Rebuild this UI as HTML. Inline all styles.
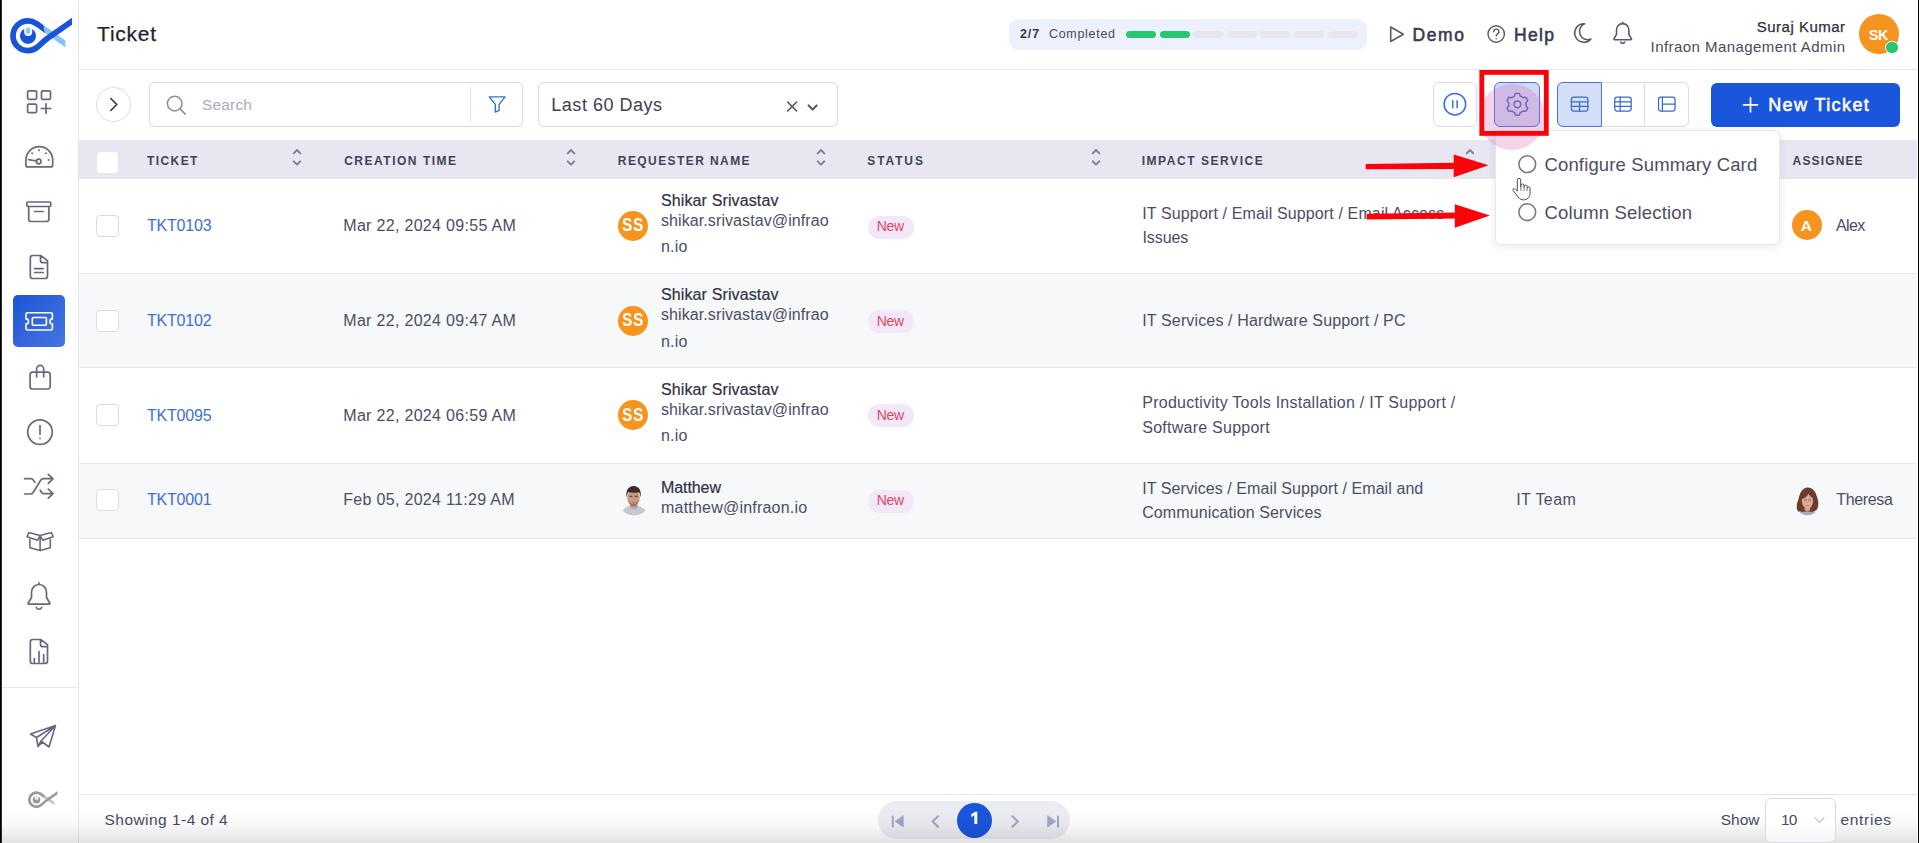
<!DOCTYPE html>
<html>
<head>
<meta charset="utf-8">
<title>Ticket</title>
<style>
*{box-sizing:border-box;margin:0;padding:0}
html,body{width:1919px;height:843px;overflow:hidden;background:#fff}
body{font-family:"Liberation Sans",sans-serif;color:#444050;position:relative;font-size:15px}
.abs{position:absolute}
.t{position:absolute;white-space:nowrap;line-height:1}
#edgeL{left:0;top:0;width:2px;height:843px;background:linear-gradient(90deg,#000 0,#000 60%,#777 100%)}
#edgeR{left:1918px;top:0;width:1px;height:843px;background:#000}
#side{left:2px;top:0;width:77px;height:843px;background:#fff;border-right:1px solid #e6e6ef}
#hdr{left:79px;top:0;width:1838px;height:69.5px;background:#fff;border-bottom:1px solid #e4e4ee}
#thead{left:79px;top:140.2px;width:1838px;height:38.5px;background:#e8e7f1}
.row{left:79px;width:1838px;border-bottom:1px solid #e7e7ef}
.g{background:#f7f8fa}
.cb{width:22.5px;height:22px;border:1px solid #dad9e4;border-radius:4px;background:#fff;left:96px}
.av{width:30px;height:30.1px;border-radius:50%;background:#f7941d;left:618px}
.bdg{left:868px;width:45.9px;height:22.8px;border-radius:11.5px;background:#f2e8fa}
.sort{position:absolute;width:10px;height:20px}
</style>
</head>
<body>
<div class="abs" id="side"></div>
<div class="abs" id="hdr"></div>
<div class="abs" id="thead"></div>
<div class="abs row" style="top:178px;height:96px"></div><div class="abs row g" style="top:274px;height:94px"></div><div class="abs row" style="top:368px;height:96px"></div><div class="abs row g" style="top:464px;height:75px"></div>

<div class="abs" style="left:13.2px;top:294.6px;width:51.8px;height:52.1px;border-radius:5px;background:linear-gradient(135deg,#1f55d6,#4576e0)"></div>
<div class="abs" style="left:2px;top:687.3px;width:77px;height:1px;background:#e6e6ef"></div>
<svg class="abs" style="left:0;top:0" width="79" height="843" viewBox="0 0 79 843" fill="none" stroke="#6a677c" stroke-width="1.7" stroke-linecap="round" stroke-linejoin="round">
<g stroke="none" >
<clipPath id="cl1853d8"><rect x="0" y="0" width="65.3" height="60"/></clipPath>
<clipPath id="cd1853d8"><rect x="0" y="0" width="72" height="60"/></clipPath>
<path d="M36.45 23.55L70 47.1" stroke="#82c4fb" stroke-width="5.5" fill="none" clip-path="url(#cl1853d8)"/>
<path d="M38 21.34L43.7 25.4Q43.3 29.5 45.3 33.2L34.9 25.76z" fill="#1853d8"/>
<path d="M78 17.1L48.8 37.4C44 40.7 41 44 37.5 47C34.5 49.5 31.5 50.65 27.9 50.65A14.9 14.9 0 0 1 13 35.75A14.9 14.9 0 0 1 27.9 20.85C31 20.85 33.8 21.8 36.45 23.55" stroke="#1853d8" stroke-width="5.7" fill="none" clip-path="url(#cd1853d8)"/>
<circle cx="28" cy="35.9" r="8" fill="#1853d8"/>
<path d="M24.2 26.5h8v5.4a4 4 0 0 1-8 0z" fill="#fff"/>
<path d="M26.1 27.8h4.2v4.4a1.5 1.5 0 0 1-1.5 1.5h-1.2a1.5 1.5 0 0 1-1.5-1.5z" fill="#8ccbfb"/>
</g>
<rect x="27.6" y="90.8" width="9" height="8.5" rx="1.2"/><rect x="41.5" y="90.8" width="9" height="8.5" rx="1.2"/><rect x="27.6" y="104.2" width="9" height="8.5" rx="1.2"/><path d="M41.3 108.5h9.5M46 103.8v9.5"/>
<path d="M25.9 164.9v-4.8a13.4 13.4 0 0 1 26.8 0v4.8a2 2 0 0 1-2 2h-22.8a2 2 0 0 1-2-2z"/><circle cx="38.7" cy="161.5" r="2.3"/><path d="M36.5 161l-8-1.4"/>
<g stroke="none" fill="#6a677c"><circle cx="32.1" cy="153.2" r="1"/><circle cx="39" cy="150.2" r="1"/><circle cx="45.9" cy="153.2" r="1"/><circle cx="48.6" cy="160" r="1"/></g>
<rect x="26.8" y="202" width="24" height="4.5" rx="1.2"/><path d="M28.7 206.5v12.5a2.5 2.5 0 0 0 2.5 2.5h15.2a2.5 2.5 0 0 0 2.5-2.5v-12.5M34.5 211.5h8.5"/>
<path d="M40.5 255.5h-7.7a2.5 2.5 0 0 0-2.5 2.5v18a2.5 2.5 0 0 0 2.5 2.5h12.2a2.5 2.5 0 0 0 2.5-2.5v-15.4zM40.5 255.5v5.1a2 2 0 0 0 2 2h5M34.6 268.6h8.6M34.6 272.5h8.6"/>
<g stroke="#fff" stroke-width="1.6"><path d="M26 314.3a1.5 1.5 0 0 1 1.5-1.5h23.4a1.5 1.5 0 0 1 1.5 1.5v4.6a2.5 2.5 0 0 0 0 5v4.6a1.5 1.5 0 0 1-1.5 1.5h-23.4a1.5 1.5 0 0 1-1.5-1.5v-4.6a2.5 2.5 0 0 0 0-5z"/><rect x="32.3" y="317.5" width="14.1" height="7.8" rx="1"/></g>
<path d="M32.6 372.2h15.1a2.5 2.5 0 0 1 2.5 2.5v11.8a2.5 2.5 0 0 1-2.5 2.5h-15.1a2.5 2.5 0 0 1-2.5-2.5v-11.8a2.5 2.5 0 0 1 2.5-2.5zM36.6 376.8v-7.8a3.55 3.55 0 0 1 7.1 0v7.8"/>
<circle cx="40" cy="432.1" r="12.3"/><path d="M40 425.6v8.5M40 438.3v.1"/>
<path d="M24.6 478.7h6.2c1.2 0 2 .5 2.6 1.4l1.4 2.2M24.6 494h5.8c1.2 0 2-.5 2.7-1.5l7.6-12.3c.6-1 1.5-1.5 2.7-1.5h9.3M40.2 490.2l1 1.8c.6 1 1.5 1.6 2.7 1.6h8.8M48.3 474.3l4.7 4.5-4.7 4.5M48.3 489.1l4.7 4.5-4.7 4.5"/>
<path d="M40.1 535.6v14.8M40.1 535.6l-11.3-3-1.8 4.2 10.5 3.4zM40.1 535.6l11.3-3 1.8 4.2-10.5 3.4zM29.9 539.4v8.4l10.2 2.8 10.2-2.8v-8.4" stroke-width="1.55"/>
<path d="M39 584.5c-4.5 0-7.5 3.5-7.5 8v5l-3.3 5.5a.8.8 0 0 0 .7 1.2h20.2a.8.8 0 0 0 .7-1.2l-3.3-5.5v-5c0-4.5-3-8-7.5-8zM39 582.8v1.5M36.3 607.5a3 3 0 0 0 5.4 0"/>
<path d="M40.5 639.5h-7.7a2.5 2.5 0 0 0-2.5 2.5v19a2.5 2.5 0 0 0 2.5 2.5h12.2a2.5 2.5 0 0 0 2.5-2.5v-16.4zM40.5 639.5v5.1a2 2 0 0 0 2 2h5M34.3 662v-3.5M39 662v-10.5M43.7 662v-7.5"/>
<path d="M55.5 725.5l-25 8.5 6 3.5zM55.5 725.5l-6.5 21.5-8-6zM36.5 737.5l1.5 9 3-5.5M38 746.5l4.5-4.5" stroke-width="1.6"/>
<g stroke="none" transform="translate(23.14,782.66) scale(0.477)">
<clipPath id="cl9a9a9a"><rect x="0" y="0" width="65.3" height="60"/></clipPath>
<clipPath id="cd9a9a9a"><rect x="0" y="0" width="72" height="60"/></clipPath>
<path d="M36.45 23.55L70 47.1" stroke="#c6c6c6" stroke-width="5.5" fill="none" clip-path="url(#cl9a9a9a)"/>
<path d="M38 21.34L43.7 25.4Q43.3 29.5 45.3 33.2L34.9 25.76z" fill="#9a9a9a"/>
<path d="M78 17.1L48.8 37.4C44 40.7 41 44 37.5 47C34.5 49.5 31.5 50.65 27.9 50.65A14.9 14.9 0 0 1 13 35.75A14.9 14.9 0 0 1 27.9 20.85C31 20.85 33.8 21.8 36.45 23.55" stroke="#9a9a9a" stroke-width="5.7" fill="none" clip-path="url(#cd9a9a9a)"/>
<circle cx="28" cy="35.9" r="8" fill="#9a9a9a"/>
<path d="M24.2 26.5h8v5.4a4 4 0 0 1-8 0z" fill="#fff"/>
<path d="M26.1 27.8h4.2v4.4a1.5 1.5 0 0 1-1.5 1.5h-1.2a1.5 1.5 0 0 1-1.5-1.5z" fill="#dcdcdc"/>
</g>
</svg>

<div class="t" style="left:97.1px;top:22.6px;font-size:21px;color:#25232e;letter-spacing:0.76px;-webkit-text-stroke:.25px #25232e">Ticket</div>
<div class="abs" style="left:1008.8px;top:18.8px;width:358.7px;height:31px;border-radius:10px;background:#ecf1fd"></div>
<div class="t" style="left:1020px;top:28px;font-size:12.5px;color:#3b3849;font-weight:700;letter-spacing:0.88px;">2/7</div>
<div class="t" style="left:1049px;top:28px;font-size:12.5px;color:#4a4757;letter-spacing:0.69px;">Completed</div>
<div class="abs" style="left:1125.5px;top:31px;width:30px;height:7px;border-radius:4px;background:#28c76f"></div><div class="abs" style="left:1159.5px;top:31px;width:30px;height:7px;border-radius:4px;background:#28c76f"></div><div class="abs" style="left:1193px;top:31px;width:30px;height:7px;border-radius:4px;background:#e7e5ee"></div><div class="abs" style="left:1226.5px;top:31px;width:30px;height:7px;border-radius:4px;background:#e7e5ee"></div><div class="abs" style="left:1260px;top:31px;width:30px;height:7px;border-radius:4px;background:#e7e5ee"></div><div class="abs" style="left:1294px;top:31px;width:30px;height:7px;border-radius:4px;background:#e7e5ee"></div><div class="abs" style="left:1327.5px;top:31px;width:30px;height:7px;border-radius:4px;background:#e7e5ee"></div>
<svg class="abs" style="left:1380px;top:10px" width="270" height="50" viewBox="1380 10 270 50" fill="none" stroke="#5a586c" stroke-width="1.6" stroke-linecap="round" stroke-linejoin="round">
<path d="M1390.7 27v14.5l12.6-7.25z"/>
<circle cx="1496.2" cy="34" r="8.2" stroke-width="1.4"/><path d="M1493.7 31.7a2.6 2.6 0 1 1 3.6 2.4c-.8.4-1.1.9-1.1 1.8M1496.2 38.6v.1" stroke-width="1.4"/>
<path d="M1584.6 23.8a9.2 9.2 0 1 0 6.2 15.3a8 8 0 0 1-6.2-15.3z"/>
<path d="M1622.7 23.6c-3.7 0-6.2 2.9-6.2 6.6v4.2l-2.6 4.4a.7.7 0 0 0 .6 1h16.4a.7.7 0 0 0 .6-1l-2.6-4.4v-4.2c0-3.7-2.5-6.6-6.2-6.6zM1622.7 22.2v1.4M1620.7 42.1a2.3 2.3 0 0 0 4 0"/>
</svg>
<div class="t" style="left:1412.6px;top:27.1px;font-size:17.5px;color:#3a394c;letter-spacing:1.53px;-webkit-text-stroke:.55px #3a394c">Demo</div>
<div class="t" style="left:1514px;top:27.1px;font-size:17.5px;color:#3a394c;letter-spacing:1.3px;-webkit-text-stroke:.55px #3a394c">Help</div>
<div class="t" style="left:1756.8px;top:18.7px;font-size:15px;color:#2f2e3d;letter-spacing:0.49px;-webkit-text-stroke:.25px #2f2e3d">Suraj Kumar</div>
<div class="t" style="left:1650.6px;top:39px;font-size:15px;color:#4a4a5e;letter-spacing:0.44px;">Infraon Management Admin</div>
<div class="abs" style="left:1859px;top:14px;width:40px;height:40px;border-radius:50%;background:#f6941f"></div>
<div class="t" style="left:1868.7px;top:27.8px;font-size:14.5px;color:#fff;font-weight:700;letter-spacing:-0.4px;">SK</div>
<div class="abs" style="left:1885.3px;top:40.6px;width:13.6px;height:13.6px;border-radius:50%;background:#28c76f;border:1px solid #fff"></div>

<div class="abs" style="left:96px;top:87.2px;width:34.8px;height:34.8px;border-radius:50%;border:1px solid #dddce7;background:#fff"></div>
<div class="abs" style="left:149px;top:82px;width:374px;height:45px;border-radius:6px;border:1px solid #d9d8e4;background:#fff"></div>
<div class="abs" style="left:470.4px;top:87px;width:1px;height:35px;background:#e3e2ea"></div>
<div class="t" style="left:202.1px;top:96.6px;font-size:15.5px;color:#a9abc0;letter-spacing:0.14px;">Search</div>
<div class="abs" style="left:538px;top:82px;width:300px;height:45px;border-radius:6px;border:1px solid #d9d8e4;background:#fff"></div>
<div class="t" style="left:551.3px;top:95.7px;font-size:18px;color:#3f3e50;letter-spacing:0.52px;">Last 60 Days</div>
<div class="abs" style="left:1432.5px;top:82px;width:44.5px;height:45px;border-radius:6px;border:1px solid #dcdbe6;background:#fff"></div>
<div class="abs" style="left:1494.2px;top:82px;width:45.4px;height:45px;border-radius:6px;border:1px solid #4a74dc;background:#cfdaf5"></div>
<div class="abs" style="left:1557px;top:82px;width:131.8px;height:45px;border-radius:6px;border:1px solid #dcdbe6;background:#fff"></div>
<div class="abs" style="left:1643.8px;top:83px;width:1px;height:43px;background:#dcdbe6"></div>
<div class="abs" style="left:1557px;top:82px;width:45px;height:45px;border-radius:6px 0 0 6px;border:1px solid #4a74dc;background:#d3def7"></div>
<div class="abs" style="left:1711px;top:82.8px;width:189px;height:44.2px;border-radius:6px;background:#1a56db"></div>
<div class="t" style="left:1768.2px;top:95.8px;font-size:18px;color:#fff;letter-spacing:1.4px;-webkit-text-stroke:.55px #fff">New Ticket</div>
<svg class="abs" style="left:79px;top:70px" width="1838" height="70" viewBox="79 70 1838 70" fill="none" stroke="#5f5b6e" stroke-width="1.6" stroke-linecap="round" stroke-linejoin="round">
<path d="M110.8 98.5l6 6-6 6" stroke="#33364f"/>
<g stroke="#8a8da5" stroke-width="1.5"><circle cx="174.7" cy="103.6" r="7.3"/><path d="M180 108.9l5.2 5.2"/></g>
<path d="M489.3 96.9h15.8l-6 7.5v6l-3.8 1.7v-7.7z" stroke="#3d6fd6" stroke-width="1.4"/>
<path d="M787.7 102.1l8.8 8.8M796.5 102.1l-8.8 8.8" stroke="#5f5b6e" stroke-width="1.5"/>
<path d="M808.6 105.5l4 4 4-4" stroke="#5f5b6e" stroke-width="2.2"/>
<g stroke="#3d6fd6" stroke-width="1.5"><circle cx="1454.9" cy="104.2" r="10.8"/><path d="M1452.7 100.7v7M1457.1 100.7v7"/></g>
<g stroke="#5565c8" stroke-width="1.5"><path d="M1520.38 96.12L1519.31 93.47A11 11 0 0 0 1515.49 93.47L1514.42 96.12A8.7 8.7 0 0 0 1511.81 97.64L1508.97 97.23A11 11 0 0 0 1507.06 100.54L1508.83 102.79A8.7 8.7 0 0 0 1508.83 105.81L1507.06 108.06A11 11 0 0 0 1508.97 111.37L1511.81 110.96A8.7 8.7 0 0 0 1514.42 112.48L1515.49 115.13A11 11 0 0 0 1519.31 115.13L1520.38 112.48A8.7 8.7 0 0 0 1522.99 110.96L1525.83 111.37A11 11 0 0 0 1527.74 108.06L1525.97 105.81A8.7 8.7 0 0 0 1525.97 102.79L1527.74 100.54A11 11 0 0 0 1525.83 97.23L1522.99 97.64A8.7 8.7 0 0 0 1520.38 96.12z"/><circle cx="1517.4" cy="104.3" r="3.4"/></g>
<g stroke="#3b68d2" stroke-width="1.25"><rect x="1571.4" y="97.2" width="16.5" height="13.8" rx="2.5"/><path d="M1571.4 101.8h16.5M1571.4 106.4h16.5M1579.6 101.8v9.2"/>
<rect x="1614.7" y="97.2" width="16.5" height="13.8" rx="2.5"/><path d="M1614.7 101.8h16.5M1614.7 106.4h16.5M1620.2 97.2v13.8"/>
<rect x="1658.5" y="97.2" width="16.5" height="13.8" rx="2.5"/><path d="M1662.4 97.2v13.8M1662.4 104.1h12.6"/></g>
<path d="M1743.6 104.8h13.9M1750.5 97.8v13.9" stroke="#fff" stroke-width="1.7"/>
</svg>

<div class="abs" style="left:96.8px;top:152.4px;width:21.2px;height:20.4px;border-radius:3.5px;background:#fff"></div>
<div class="t" style="left:146.9px;top:155.1px;font-size:12px;color:#444256;font-weight:700;letter-spacing:1.44px;">TICKET</div><div class="t" style="left:344.2px;top:155.1px;font-size:12px;color:#444256;font-weight:700;letter-spacing:1.51px;">CREATION TIME</div><div class="t" style="left:617.8px;top:155.1px;font-size:12px;color:#444256;font-weight:700;letter-spacing:1.42px;">REQUESTER NAME</div><div class="t" style="left:867.3px;top:155.1px;font-size:12px;color:#444256;font-weight:700;letter-spacing:1.88px;">STATUS</div><div class="t" style="left:1141.7px;top:155.1px;font-size:12px;color:#444256;font-weight:700;letter-spacing:1.55px;">IMPACT SERVICE</div><div class="t" style="left:1792.6px;top:155.1px;font-size:12px;color:#444256;font-weight:700;letter-spacing:1.14px;">ASSIGNEE</div>
<svg class="sort" style="left:291.6px;top:147.4px" viewBox="0 0 10 20" fill="none" stroke="#7f7c92" stroke-width="1.9" stroke-linecap="round" stroke-linejoin="round"><path d="M1.7 6.3L5 3l3.3 3.3M1.7 14.3L5 17.6l3.3-3.3"/></svg><svg class="sort" style="left:566.3px;top:147.4px" viewBox="0 0 10 20" fill="none" stroke="#7f7c92" stroke-width="1.9" stroke-linecap="round" stroke-linejoin="round"><path d="M1.7 6.3L5 3l3.3 3.3M1.7 14.3L5 17.6l3.3-3.3"/></svg><svg class="sort" style="left:815.9px;top:147.4px" viewBox="0 0 10 20" fill="none" stroke="#7f7c92" stroke-width="1.9" stroke-linecap="round" stroke-linejoin="round"><path d="M1.7 6.3L5 3l3.3 3.3M1.7 14.3L5 17.6l3.3-3.3"/></svg><svg class="sort" style="left:1090.8px;top:147.4px" viewBox="0 0 10 20" fill="none" stroke="#7f7c92" stroke-width="1.9" stroke-linecap="round" stroke-linejoin="round"><path d="M1.7 6.3L5 3l3.3 3.3M1.7 14.3L5 17.6l3.3-3.3"/></svg><svg class="sort" style="left:1465.3px;top:147.4px" viewBox="0 0 10 20" fill="none" stroke="#7f7c92" stroke-width="1.9" stroke-linecap="round" stroke-linejoin="round"><path d="M1.7 6.3L5 3l3.3 3.3M1.7 14.3L5 17.6l3.3-3.3"/></svg><div class="abs cb" style="top:214.85px"></div><div class="t" style="left:147px;top:218.2px;font-size:16px;color:#3d6fd6;letter-spacing:-0.21px;">TKT0103</div><div class="t" style="left:343.25px;top:218.2px;font-size:16px;color:#4a4e64;letter-spacing:0.31px;">Mar 22, 2024 09:55 AM</div><div class="abs bdg" style="top:215.75px"></div><div class="t" style="left:876.8px;top:218.75px;font-size:14px;color:#dd4760;letter-spacing:-0.35px;">New</div><div class="abs av" style="top:210.5px"></div><div class="t" style="left:622.1px;top:218.3px;font-size:15.5px;color:#fff;font-weight:700;letter-spacing:0.6px;transform:scaleY(1.15);transform-origin:50% 85%">SS</div><div class="t" style="left:661px;top:193px;font-size:16px;color:#2f3246;letter-spacing:0.12px;-webkit-text-stroke:.2px #2f3246">Shikar Srivastav</div><div class="t" style="left:661px;top:212.75px;font-size:16px;color:#4a4e64;letter-spacing:0.09px;">shikar.srivastav@infrao</div><div class="t" style="left:661px;top:238.75px;font-size:16px;color:#4a4e64;letter-spacing:0.17px;">n.io</div><div class="abs cb" style="top:309.85px"></div><div class="t" style="left:147px;top:313.25px;font-size:16px;color:#3d6fd6;letter-spacing:-0.21px;">TKT0102</div><div class="t" style="left:343.25px;top:313.25px;font-size:16px;color:#4a4e64;letter-spacing:0.31px;">Mar 22, 2024 09:47 AM</div><div class="abs bdg" style="top:310.1px"></div><div class="t" style="left:876.8px;top:313.75px;font-size:14px;color:#dd4760;letter-spacing:-0.35px;">New</div><div class="abs av" style="top:305.5px"></div><div class="t" style="left:622.1px;top:313.3px;font-size:15.5px;color:#fff;font-weight:700;letter-spacing:0.6px;transform:scaleY(1.15);transform-origin:50% 85%">SS</div><div class="t" style="left:661px;top:287px;font-size:16px;color:#2f3246;letter-spacing:0.12px;-webkit-text-stroke:.2px #2f3246">Shikar Srivastav</div><div class="t" style="left:661px;top:307px;font-size:16px;color:#4a4e64;letter-spacing:0.09px;">shikar.srivastav@infrao</div><div class="t" style="left:661px;top:333.75px;font-size:16px;color:#4a4e64;letter-spacing:0.17px;">n.io</div><div class="abs cb" style="top:404.1px"></div><div class="t" style="left:147px;top:408px;font-size:16px;color:#3d6fd6;letter-spacing:-0.21px;">TKT0095</div><div class="t" style="left:343.25px;top:408px;font-size:16px;color:#4a4e64;letter-spacing:0.31px;">Mar 22, 2024 06:59 AM</div><div class="abs bdg" style="top:404.4px"></div><div class="t" style="left:876.8px;top:408px;font-size:14px;color:#dd4760;letter-spacing:-0.35px;">New</div><div class="abs av" style="top:400px"></div><div class="t" style="left:622.1px;top:407.8px;font-size:15.5px;color:#fff;font-weight:700;letter-spacing:0.6px;transform:scaleY(1.15);transform-origin:50% 85%">SS</div><div class="t" style="left:661px;top:382px;font-size:16px;color:#2f3246;letter-spacing:0.12px;-webkit-text-stroke:.2px #2f3246">Shikar Srivastav</div><div class="t" style="left:661px;top:401.5px;font-size:16px;color:#4a4e64;letter-spacing:0.09px;">shikar.srivastav@infrao</div><div class="t" style="left:661px;top:427.75px;font-size:16px;color:#4a4e64;letter-spacing:0.17px;">n.io</div><div class="abs cb" style="top:489.3px"></div><div class="t" style="left:147px;top:492.4px;font-size:16px;color:#3d6fd6;letter-spacing:-0.21px;">TKT0001</div><div class="t" style="left:343.25px;top:492.4px;font-size:16px;color:#4a4e64;letter-spacing:0.31px;">Feb 05, 2024 11:29 AM</div><div class="abs bdg" style="top:489.9px"></div><div class="t" style="left:876.8px;top:493.4px;font-size:14px;color:#dd4760;letter-spacing:-0.35px;">New</div><div class="t" style="left:661px;top:479.9px;font-size:16px;color:#2f3246;letter-spacing:-0.08px;-webkit-text-stroke:.2px #2f3246">Matthew</div><div class="t" style="left:661px;top:499.7px;font-size:16px;color:#4a4e64;letter-spacing:0.21px;">matthew@infraon.io</div><div class="t" style="left:1142.25px;top:205.75px;font-size:16px;color:#4a4e64;letter-spacing:0.13px;">IT Support / Email Support / Email Access</div><div class="t" style="left:1142.5px;top:229.75px;font-size:16px;color:#4a4e64;letter-spacing:-0.08px;">Issues</div><div class="t" style="left:1142.25px;top:313.25px;font-size:16px;color:#4a4e64;letter-spacing:0.14px;">IT Services / Hardware Support / PC</div><div class="t" style="left:1142.25px;top:394.75px;font-size:16px;color:#4a4e64;letter-spacing:0.25px;">Productivity Tools Installation / IT Support /</div><div class="t" style="left:1142.25px;top:419.75px;font-size:16px;color:#4a4e64;letter-spacing:0.25px;">Software Support</div><div class="t" style="left:1142.2px;top:480.8px;font-size:16px;color:#4a4e64;letter-spacing:0.08px;">IT Services / Email Support / Email and</div><div class="t" style="left:1142.2px;top:504.6px;font-size:16px;color:#4a4e64;letter-spacing:0.11px;">Communication Services</div><div class="t" style="left:1516.3px;top:492px;font-size:16px;color:#4a4e64;letter-spacing:0.37px;">IT Team</div><div class="abs" style="left:1791.8px;top:210.4px;width:30px;height:30px;border-radius:50%;background:#f6941f"></div><div class="t" style="left:1800.7px;top:217.9px;font-size:15.5px;color:#fff;font-weight:700;">A</div><div class="t" style="left:1835.9px;top:217.9px;font-size:16px;color:#4a4e64;letter-spacing:-0.6px;">Alex</div><div class="t" style="left:1836.2px;top:492px;font-size:16px;color:#4a4e64;letter-spacing:-0.33px;">Theresa</div>
<svg class="abs" style="left:618px;top:484px" width="32" height="32" viewBox="0 0 32 32"><filter id="bl"><feGaussianBlur stdDeviation=".45"/></filter><g filter="url(#bl)">
<path d="M4.7 26.5c1.5-2.5 4-4 7-4.7h7.6c3 .7 6.2 2.2 8.2 4.7-2.5 3-6.5 4.9-11.5 4.9s-9-1.9-11.3-4.9z" fill="#c5c9d0"/>
<path d="M11.8 22c1.2 1.3 2.5 1.8 3.9 1.8s2.7-.5 3.9-1.8l-.3-2.5h-7.2z" fill="#c48f7c"/>
<ellipse cx="15.5" cy="13.6" rx="6.3" ry="8.2" fill="#c99b84"/>
<path d="M8.6 13.5c-1.3-6.5 1.8-11.5 7-11.5 5.5 0 8.3 5 6.9 11.5-.3-2.8-.8-4.3-1.7-5.3-2.8.9-7.6.9-10.3-.1-.9 1-1.5 2.6-1.9 5.4z" fill="#3b2b26"/>
<path d="M10.3 15.5c.4 4.3 2.4 6.7 5.2 6.7s4.8-2.4 5.2-6.7c-.8 2.8-2.6 4.2-5.2 4.2s-4.4-1.4-5.2-4.2z" fill="#7a5648" opacity=".5"/>
<path d="M11.3 11.7h3.2v1.3h-3.2zM16.6 11.7h3.2v1.3h-3.2z" fill="#4a342c" opacity=".75"/><path d="M13.8 18.3h3.5v.8h-3.5z" fill="#8a5a4c" opacity=".7"/>
<path d="M11.5 22.6c1.3 1.5 2.7 2.2 4.2 2.2s2.9-.7 4.2-2.2" fill="none" stroke="#c7909f" stroke-width="1"/>
</g></svg>
<svg class="abs" style="left:1794px;top:486px" width="28" height="30" viewBox="0 0 28 30"><g filter="url(#bl)">
<path d="M5.5 26c1.5-1.2 3.5-1.8 5.5-2h5c2 .2 4 .8 5.5 2-1.8 2-4.5 3.2-8 3.2s-6.2-1.2-8-3.2z" fill="#aaa5cb"/>
<path d="M4 25.5c-2-3.5-1.5-8 .5-12C5.5 8 7.5 2.5 13 1.5c5-.5 8.5 3.5 9.5 8 1.5 4 3 8.5.5 14-1.5 1.8-4.5 2.3-6.5 2.3h-6c-2.5 0-5-.5-6.5-.3z" fill="#6a3d2c"/>
<path d="M10.6 20.5h5.6v3.5c-.8 1.2-1.8 1.7-2.8 1.7s-2-.5-2.8-1.7z" fill="#d19c87"/>
<ellipse cx="13.5" cy="14.8" rx="5.6" ry="7.6" fill="#dba893"/>
<path d="M8 13c0-4.6 2.2-7.6 5.8-7.6 3.3 0 5.2 2.5 5.2 6.6-2-1-3.6-2.4-4.3-4.2-1.3 2.4-3.9 4.4-6.7 5.2z" fill="#6a3d2c"/>
<path d="M10.3 13.4h2.5v1h-2.5zM14.5 13.4h2.5v1h-2.5z" fill="#5a3a30" opacity=".7"/><path d="M12 19h3v.8h-3z" fill="#b5615c" opacity=".8"/>
</g></svg>

<div class="abs" style="left:79px;top:794px;width:1838px;height:1px;background:#e4e4ee"></div>
<div class="t" style="left:104.5px;top:811.7px;font-size:15.5px;color:#454c63;letter-spacing:0.46px;">Showing 1-4 of 4</div>
<div class="abs" style="left:878.2px;top:801px;width:192.3px;height:38px;border-radius:19px;background:#ebebf2"></div>
<div class="abs" style="left:956.8px;top:802.9px;width:35.2px;height:35.2px;border-radius:50%;background:#1a56db"></div>

<svg class="abs" style="left:878px;top:801px" width="193" height="38" viewBox="878 801 193 38" fill="none" stroke="#9fa5c5" stroke-width="2" stroke-linecap="round" stroke-linejoin="round">
<path d="M892.8 816.5v10" /><path d="M903.2 816v11l-7.8-5.5z" fill="#9fa5c5" stroke-width=".8"/>
<path d="M938 816.2l-5.3 5.3 5.3 5.3"/>
<path d="M1012.5 816.2l5.3 5.3-5.3 5.3"/>
<path d="M1058 816.5v10"/><path d="M977.3 811.7V824H974.3V815.3L971.2 817.2V814.3L975.2 811.7z" fill="#fff" stroke="none"/><path d="M1047.7 816v11l7.8-5.5z" fill="#9fa5c5" stroke-width=".8"/>
</svg>
<div class="t" style="left:1720.7px;top:811.6px;font-size:15.5px;color:#454c63;">Show</div>
<div class="abs" style="left:2px;top:810px;width:1915px;height:33px;background:linear-gradient(180deg,rgba(0,0,0,0) 0%,rgba(0,0,0,.028) 45%,rgba(0,0,0,.115) 100%)"></div>

<div class="abs" style="left:1765.3px;top:798.4px;width:70.4px;height:44.2px;border-radius:6px;border:1px solid #d9d8e4;background:linear-gradient(180deg,#fff 55%,#f5f5f5 100%)"></div>
<div class="t" style="left:1780.9px;top:811.6px;font-size:15.5px;color:#454c63;letter-spacing:-0.8px;">10</div>
<svg class="abs" style="left:1812px;top:814px" width="16" height="12" viewBox="0 0 16 12" fill="none" stroke="#c6c5d3" stroke-width="1.3" stroke-linecap="round" stroke-linejoin="round"><path d="M3 3.8l4.5 4.5 4.5-4.5"/></svg>
<div class="t" style="left:1840.5px;top:811.6px;font-size:15.5px;color:#454c63;letter-spacing:0.67px;">entries</div>


<div class="abs" id="menu" style="left:1494.7px;top:130px;width:285px;height:115.4px;border-radius:6px;background:#fff;border:1px solid #e9e8f1;box-shadow:0 2px 8px rgba(47,43,61,.10)"></div>
<svg class="abs" style="left:1515px;top:150px" width="26" height="76" viewBox="1515 150 26 76" fill="#fff" stroke="#777488" stroke-width="1.5"><circle cx="1527.3" cy="164.2" r="8.4"/><circle cx="1527.3" cy="212.1" r="8.4"/></svg>
<div class="t" style="left:1544.5px;top:155.8px;font-size:18.5px;color:#4c4e63;letter-spacing:0.14px;">Configure Summary Card</div>
<div class="t" style="left:1544.5px;top:203.7px;font-size:18.5px;color:#4c4e63;letter-spacing:0.17px;">Column Selection</div>
<div class="abs" style="left:1479px;top:83.5px;width:66px;height:66px;border-radius:50%;background:rgba(212,100,180,.275)"></div>
<svg class="abs" style="left:1475px;top:66px" width="80" height="76" viewBox="1475 66 80 76" fill="none" stroke="#fb0209" stroke-width="4.8"><rect x="1481.8" y="72.4" width="64.5" height="61"/></svg>
<svg class="abs" style="left:1360px;top:145px" width="150" height="90" viewBox="1360 145 150 90">
<g fill="#fc0209"><path d="M1365.7 164L1455 162.8V169L1365.7 169.3z"/><path d="M1453.7 154.4L1488.6 165.3L1453.7 177.3z"/>
<path d="M1366.7 213.8L1456 212.6V218.6L1366.7 219.4z"/><path d="M1454.8 204.2L1489.9 215.4L1454.8 227.7z"/></g>
</svg>
<svg class="abs" style="left:1511px;top:177px" width="22" height="26" viewBox="0 0 22 26" fill="#fff" stroke="#4d4d4d" stroke-width="1" stroke-linejoin="round" stroke-linecap="round">
<path d="M6.3 13.6V3.1a1.7 1.7 0 0 1 3.4 0V9.7l.3-.1V8.5a1.5 1.5 0 0 1 3 0V10l.3 0V9.5a1.45 1.45 0 0 1 2.9 0v1.2l.3 0a1.35 1.35 0 0 1 2.6.5v5.2c0 3.2-2.2 6-5.6 6.4-2.8.3-4.8-.6-6.4-2.8-1.5-2-3.3-4.2-5-6.5-.9-1.3.8-2.6 2-1.6z"/>
<path d="M9.9 9.8v3.6M13 10v3.4M16.1 10.8v2.8" stroke-width=".8"/>
</svg>

<div class="abs" id="edgeL"></div>
<div class="abs" id="edgeR"></div>
</body>
</html>
